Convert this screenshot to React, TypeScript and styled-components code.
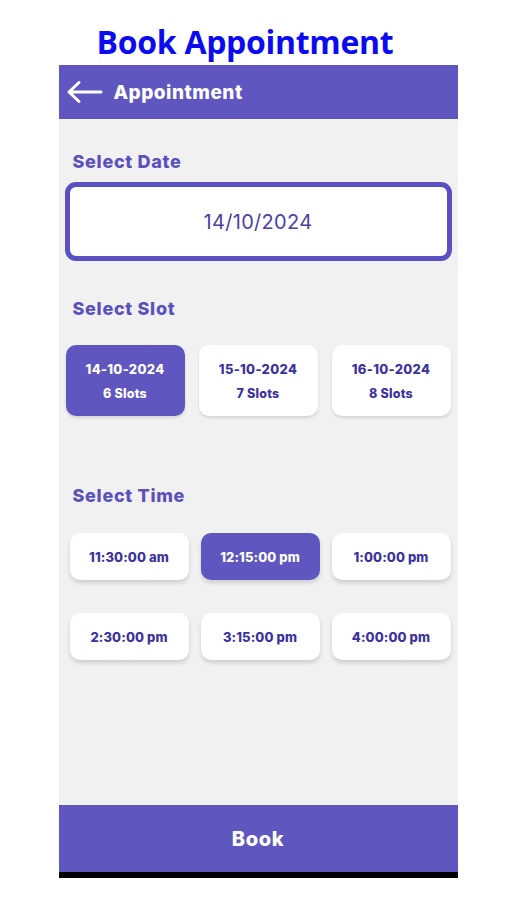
import styled, { createGlobalStyle } from "styled-components";

const GlobalStyle = createGlobalStyle`
  body {
    margin: 0;
    background: #ffffff;
    font-family: "Inter", "Noto Sans", sans-serif;
  }
`;

const slots = [
  { date: "14-10-2024", count: "6 Slots" },
  { date: "15-10-2024", count: "7 Slots" },
  { date: "16-10-2024", count: "8 Slots" },
];

const times = [
  "11:30:00 am",
  "12:15:00 pm",
  "1:00:00 pm",
  "2:30:00 pm",
  "3:15:00 pm",
  "4:00:00 pm",
];

const BackArrow = () => (
  <svg width="38" height="26" viewBox="0 0 38 26" fill="none">
    <path
      d="M36 13H4M14 3.5L4 13L14 22.5"
      stroke="#fff"
      strokeWidth="3"
      strokeLinecap="round"
      strokeLinejoin="round"
    />
  </svg>
);

const App = () => {
  return (
    <Page>
      <GlobalStyle />
      <Title>Book Appointment</Title>
      <Phone>
        <Header>
          <BackArrow />
          <HeaderTitle>Appointment</HeaderTitle>
        </Header>
        <Body>
          <Label>Select Date</Label>
          <DateField>14/10/2024</DateField>

          <Label $top={38}>Select Slot</Label>
          <SlotRow>
            {slots.map((s, i) => (
              <SlotCard key={s.date} $active={i === 0}>
                <SlotDate>{s.date}</SlotDate>
                <SlotCount>{s.count}</SlotCount>
              </SlotCard>
            ))}
          </SlotRow>

          <Label $top={70}>Select Time</Label>
          <TimeGrid>
            {times.map((t, i) => (
              <TimeButton key={t} $active={i === 1}>
                {t}
              </TimeButton>
            ))}
          </TimeGrid>
        </Body>
        <BookBar>Book</BookBar>
      </Phone>
    </Page>
  );
};

export default App;

const Page = styled.div`
  width: 506px;
  height: 900px;
  display: flex;
  flex-direction: column;
  align-items: center;
`;

const Title = styled.h1`
  margin: 22px 16px 0 0;
  height: 43px;
  font-family: "Open Sans", sans-serif;
  font-weight: 700;
  font-size: 32px;
  line-height: 40px;
  color: #0b0bf2;
  letter-spacing: -0.3px;
`;

const Phone = styled.div`
  width: 399px;
  margin-left: 10px;
  height: 813px;
  display: flex;
  flex-direction: column;
  background: #f1f1f1;
`;

const Header = styled.div`
  height: 54px;
  background: #5f56c0;
  display: flex;
  align-items: center;
  gap: 11px;
  padding: 0 6px;
`;

const HeaderTitle = styled.span`
  color: #ffffff;
  font-weight: 800;
  font-size: 19px;
  letter-spacing: 0.5px;
`;

const Body = styled.div`
  flex: 1;
  display: flex;
  flex-direction: column;
  padding: 33px 6px 0 7px;
`;

const Label = styled.div<{ $top?: number }>`
  margin: ${(p) => p.$top ?? 0}px 0 0 7px;
  font-weight: 800;
  font-size: 18px;
  line-height: 20px;
  letter-spacing: 0.7px;
  color: #5b51bd;
`;

const DateField = styled.div`
  margin: 10px 0 0 -1px;
  height: 69px;
  border: 5px solid #5a50c0;
  border-radius: 11px;
  background: #ffffff;
  display: flex;
  align-items: center;
  justify-content: center;
  font-size: 20px;
  color: #4a41a4;
  letter-spacing: 0.3px;
`;

const SlotRow = styled.div`
  margin-top: 26px;
  display: grid;
  grid-template-columns: repeat(3, 119px);
  gap: 14px;
`;

const SlotCard = styled.div<{ $active?: boolean }>`
  height: 71px;
  border-radius: 10px;
  background: ${(p) => (p.$active ? "#5f56c0" : "#ffffff")};
  color: ${(p) => (p.$active ? "#ffffff" : "#3b32a0")};
  box-shadow: 0 2px 3px rgba(0, 0, 0, 0.12);
  display: flex;
  flex-direction: column;
  align-items: center;
  justify-content: center;
  gap: 9px;
`;

const SlotDate = styled.div`
  font-weight: 800;
  font-size: 13px;
  letter-spacing: 0.3px;
`;

const SlotCount = styled.div`
  font-weight: 800;
  font-size: 12.5px;
  letter-spacing: 0.2px;
`;

const TimeGrid = styled.div`
  margin: 27px 0 0 4px;
  display: grid;
  grid-template-columns: repeat(3, 119px);
  column-gap: 12px;
  row-gap: 33px;
`;

const TimeButton = styled.div<{ $active?: boolean }>`
  height: 47px;
  border-radius: 10px;
  background: ${(p) => (p.$active ? "#5f56c0" : "#ffffff")};
  color: ${(p) => (p.$active ? "#ffffff" : "#3b32a0")};
  box-shadow: 0 3px 4px rgba(0, 0, 0, 0.14);
  display: flex;
  align-items: center;
  justify-content: center;
  font-weight: 800;
  font-size: 13px;
  letter-spacing: 0.1px;
`;

const BookBar = styled.div`
  height: 67px;
  background: #5f56c0;
  border-bottom: 6px solid #000000;
  display: flex;
  align-items: center;
  justify-content: center;
  color: #ffffff;
  font-weight: 800;
  font-size: 20px;
  letter-spacing: 0.6px;
`;
